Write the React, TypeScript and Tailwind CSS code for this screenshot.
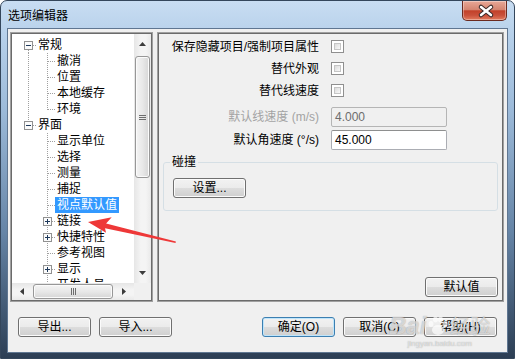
import React from "react";

const UI_FONT = '"Liberation Sans", "Noto Sans CJK SC", sans-serif';

type TreeItem = {
  label: string;
  root?: boolean;
  box?: "-" | "+";
  parentLine?: boolean;
  last?: boolean;
  lineAbove?: boolean;
  lineBelow?: boolean;
  selected?: boolean;
};

const TREE: TreeItem[] = [
  { label: "常规", root: true, box: "-", lineBelow: true },
  { label: "撤消", parentLine: true },
  { label: "位置", parentLine: true },
  { label: "本地缓存", parentLine: true },
  { label: "环境", parentLine: true, last: true },
  { label: "界面", root: true, box: "-", lineAbove: true },
  { label: "显示单位" },
  { label: "选择" },
  { label: "测量" },
  { label: "捕捉" },
  { label: "视点默认值", selected: true },
  { label: "链接", box: "+" },
  { label: "快捷特性", box: "+" },
  { label: "参考视图" },
  { label: "显示", box: "+" },
  { label: "开发人员" },
];

const dot = { stroke: "#a0a0a0", strokeWidth: 1, strokeDasharray: "1 1" };

function Box({ x, sign }: { x: number; sign: "-" | "+" }) {
  return (
    <g>
      <rect x={x + 0.5} y={4.5} width={8} height={8} fill="#fbfbfb" stroke="#919191" />
      <rect x={x + 2} y={8} width={5} height={1} fill="#1e395b" />
      {sign === "+" && <rect x={x + 4} y={6} width={1} height={5} fill="#1e395b" />}
    </g>
  );
}

function Guides({ item }: { item: TreeItem }) {
  if (item.root) {
    return (
      <svg width={24} height={16} className="shrink-0">
        {item.lineAbove && <line x1={16.5} y1={0} x2={16.5} y2={4} {...dot} />}
        {item.lineBelow && <line x1={16.5} y1={13} x2={16.5} y2={16} {...dot} />}
        <line x1={21} y1={8.5} x2={24} y2={8.5} {...dot} />
        <Box x={12} sign={item.box!} />
      </svg>
    );
  }
  return (
    <svg width={43} height={16} className="shrink-0">
      {item.parentLine && <line x1={16.5} y1={0} x2={16.5} y2={16} {...dot} />}
      <line x1={35.5} y1={0} x2={35.5} y2={item.last ? 9 : 16} {...dot} />
      <line x1={item.box ? 40 : 36} y1={8.5} x2={43} y2={8.5} {...dot} />
      {item.box && <Box x={31} sign={item.box} />}
    </svg>
  );
}

function Arrow({ dir }: { dir: "up" | "down" | "left" | "right" }) {
  const pts = {
    up: "0,4 3.5,0 7,4",
    down: "0,0 3.5,4 7,0",
    left: "4,0 0,3.5 4,7",
    right: "0,0 4,3.5 0,7",
  }[dir];
  const vertical = dir === "up" || dir === "down";
  return (
    <svg width={vertical ? 7 : 4} height={vertical ? 4 : 7}>
      <polygon points={pts} fill="#3c3c3c" />
    </svg>
  );
}

function Button({ label, primary, className = "" }: { label: string; primary?: boolean; className?: string }) {
  return (
    <button
      type="button"
      className={
        "flex h-[20px] w-[73px] shrink-0 items-center justify-center rounded-[3px] border bg-[linear-gradient(#f2f2f2,#ebebeb_50%,#dddddd_50%,#cfcfcf)] text-[12px] leading-[14px] text-black " +
        (primary
          ? "border-[#3c7fb1] shadow-[inset_0_0_0_1px_#bfe5fb] "
          : "border-[#707070] shadow-[inset_0_0_0_1px_#fbfbfb] ") +
        className
      }
    >
      {label}
    </button>
  );
}

function Checkbox() {
  return (
    <div className="h-[13px] w-[13px] shrink-0 border border-[#8f8f8f] bg-white p-[2px]">
      <div className="h-full w-full border border-[#c5c5c5] bg-[linear-gradient(135deg,#dcdcdc,#f8f8f8)]" />
    </div>
  );
}

function TreePanel() {
  return (
    <div className="h-[270px] w-[143px] shrink-0 border border-[#a0a0a0]">
      <div className="flex h-full flex-col border border-[#6b6b6b] bg-white">
        <div className="flex min-h-0 flex-1">
          <div className="min-w-0 flex-1 overflow-hidden pt-[3px]">
            {TREE.map((item) => (
              <div key={item.label} className="flex h-[16px] items-center">
                <Guides item={item} />
                <span
                  className={
                    "whitespace-nowrap px-[2px] text-[12px] leading-[16px] " +
                    (item.selected ? "bg-[#3399ff] text-white" : "text-black")
                  }
                >
                  {item.label}
                </span>
              </div>
            ))}
          </div>
          {/* vertical scrollbar */}
          <div className="flex w-[17px] shrink-0 flex-col bg-[linear-gradient(90deg,#e6e6e6,#f4f4f4_40%,#f4f4f4_70%,#e9e9e9)]">
            <div className="flex h-[20px] items-center justify-center">
              <Arrow dir="up" />
            </div>
            <div className="mx-[1px] mt-[2px] flex h-[122px] items-center justify-center rounded-[3px] border border-[#979797] bg-[linear-gradient(90deg,#f4f4f4,#e8e8e8_50%,#d6d6d6)] shadow-[inset_0_0_0_1px_#fbfbfb]">
              <div className="flex flex-col gap-[1px]">
                <div className="h-[1px] w-[7px] bg-[#6d6d6d]" />
                <div className="h-[1px] w-[7px] bg-[#6d6d6d]" />
                <div className="h-[1px] w-[7px] bg-[#6d6d6d]" />
              </div>
            </div>
            <div className="flex-1" />
            <div className="flex h-[20px] items-center justify-center">
              <Arrow dir="down" />
            </div>
          </div>
        </div>
        {/* horizontal scrollbar */}
        <div className="flex h-[17px] shrink-0">
          <div className="flex flex-1 bg-[linear-gradient(180deg,#e6e6e6,#f4f4f4_40%,#f4f4f4_70%,#e9e9e9)]">
            <div className="flex w-[20px] items-center justify-center">
              <Arrow dir="left" />
            </div>
            <div className="my-[1px] ml-[1px] flex w-[80px] items-center justify-center rounded-[3px] border border-[#979797] bg-[linear-gradient(180deg,#f4f4f4,#e8e8e8_50%,#d6d6d6)] shadow-[inset_0_0_0_1px_#fbfbfb]">
              <div className="flex gap-[1px]">
                <div className="h-[7px] w-[1px] bg-[#6d6d6d]" />
                <div className="h-[7px] w-[1px] bg-[#6d6d6d]" />
                <div className="h-[7px] w-[1px] bg-[#6d6d6d]" />
              </div>
            </div>
            <div className="flex-1" />
            <div className="flex w-[20px] items-center justify-center">
              <Arrow dir="right" />
            </div>
          </div>
          <div className="w-[17px] bg-[#f0f0f0]" />
        </div>
      </div>
    </div>
  );
}

function OptionsPanel() {
  const label = "w-[160px] shrink-0 whitespace-nowrap text-right text-[12px] leading-[14px]";
  return (
    <div className="h-[270px] w-[347px] shrink-0 border border-[#a0a0a0]">
      <div className="flex h-full flex-col border border-[#6b6b6b] bg-[#f0f0f0] pt-[1px]">
        {["保存隐藏项目/强制项目属性", "替代外观", "替代线速度"].map((t) => (
          <div key={t} className="flex h-[22px] items-center">
            <span className={label + " pt-[2px] text-black"}>{t}</span>
            <div className="ml-[12px]">
              <Checkbox />
            </div>
          </div>
        ))}
        <div className="mt-[6px] flex h-[20px] items-center">
          <span className={label + " text-[#a3a3a3]"}>默认线速度 (m/s)</span>
          <div className="ml-[12px] flex h-[20px] w-[116px] items-center rounded-[2px] border border-[#b5b5b5] bg-[#f0f0f0] px-[3px] text-[12px] text-[#6d6d6d]">
            4.000
          </div>
        </div>
        <div className="mt-[3px] flex h-[20px] items-center">
          <span className={label + " text-black"}>默认角速度 (°/s)</span>
          <div className="ml-[12px] flex h-[20px] w-[116px] items-center rounded-[2px] border border-[#abadb3] border-t-[#8e8f8f] bg-white px-[3px] text-[12px] text-black">
            45.000
          </div>
        </div>
        <fieldset className="mx-[4px] mt-[5px] rounded-[3px] border border-[#d5dfe5] pb-[12px] pl-[6px] pt-[9px]">
          <legend className="px-[2px] text-[12px] leading-[14px] text-black">碰撞</legend>
          <Button label="设置..." className="ml-[3px]" />
        </fieldset>
        <div className="mt-auto flex justify-end pb-[3px] pr-[4px]">
          <Button label="默认值" />
        </div>
      </div>
    </div>
  );
}

function CloseButton() {
  return (
    <div className="h-[20px] w-[45px] rounded-b-[5px] border border-t-0 border-[#6b2a1f] bg-[linear-gradient(#e8a897,#d58571_45%,#c2412a_52%,#c9503a_75%,#e27b5e)] shadow-[inset_0_0_0_1px_rgba(255,255,255,0.35)]">
      <svg width={45} height={20}>
        <g strokeLinecap="round">
          <line x1={18} y1={6} x2={28} y2={14} stroke="#3a2a2a" strokeWidth={4.5} />
          <line x1={28} y1={6} x2={18} y2={14} stroke="#3a2a2a" strokeWidth={4.5} />
          <line x1={18} y1={6} x2={28} y2={14} stroke="#ffffff" strokeWidth={2.5} />
          <line x1={28} y1={6} x2={18} y2={14} stroke="#ffffff" strokeWidth={2.5} />
        </g>
      </svg>
    </div>
  );
}

export default function App() {
  return (
    <div
      className="relative h-[359px] w-[515px] overflow-hidden rounded-t-[7px] border border-[#34465b] bg-[linear-gradient(180deg,#c8ddf2_0%,#b6d0ea_10%,#9dbbda_30%,#6584a6_65%,#2c3e54_100%)]"
      style={{ fontFamily: UI_FONT }}
    >
      <div className="flex h-[27px] items-start justify-between pl-[7px] pr-[7px]">
        <span className="pt-[6px] text-[12px] leading-[16px] text-black" style={{ fontFamily: '"Noto Sans CJK SC", sans-serif' }}>
          选项编辑器
        </span>
        <CloseButton />
      </div>

      <div className="ml-[6px] mr-[6px] flex h-[325px] flex-col border border-[#5f7691] bg-[#f0f0f0]">
        <div className="flex gap-[4px] pl-[2px] pt-[3px]">
          <TreePanel />
          <OptionsPanel />
        </div>
        <div className="mt-[15px] flex gap-[8px] px-[10px]">
          <Button label="导出..." />
          <Button label="导入..." />
          <Button label="确定(O)" primary className="ml-auto" />
          <Button label="取消(C)" />
          <Button label="帮助(H)" />
        </div>
      </div>

      {/* red annotation arrow */}
      <svg className="pointer-events-none absolute left-0 top-0" width={515} height={359}>
        <g transform="translate(87 221) rotate(13)">
          <polygon points="0,0 22,-10 18,-2.5 90,-0.8 90,0.8 18,2.2 20,6.5" fill="#ee3838" />
        </g>
      </svg>

      {/* watermark */}
      <div className="pointer-events-none absolute left-[388px] top-[312px] flex flex-col items-center text-white/60 [text-shadow:0_0_1px_rgba(90,90,90,0.6)]">
        <div className="flex items-center">
          <span className="text-[24px] font-bold italic leading-[26px]">Bai</span>
          <svg width={22} height={22} viewBox="0 0 22 22" className="mx-[1px] opacity-70">
            <ellipse cx={11} cy={15} rx={6} ry={5} fill="white" />
            <ellipse cx={4} cy={9} rx={2.5} ry={3} fill="white" />
            <ellipse cx={8.5} cy={4.5} rx={2.5} ry={3} fill="white" />
            <ellipse cx={13.5} cy={4.5} rx={2.5} ry={3} fill="white" />
            <ellipse cx={18} cy={9} rx={2.5} ry={3} fill="white" />
          </svg>
          <span className="text-[20px] leading-[26px]" style={{ fontFamily: '"Noto Sans CJK SC", sans-serif' }}>
            经验
          </span>
        </div>
        <span className="text-[8px] leading-[9px]">jingyan.baidu.com</span>
      </div>
    </div>
  );
}
